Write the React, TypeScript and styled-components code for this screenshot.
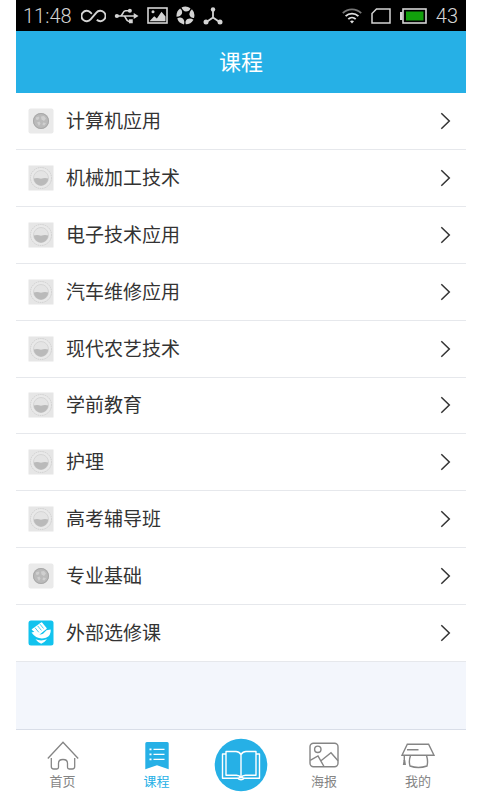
import React from 'react';
import styled, { createGlobalStyle } from 'styled-components';

const BLUE = '#26b0e6';
const GREY = '#858585';

const GlobalStyle = createGlobalStyle`
  * { box-sizing: border-box; }
  body {
    margin: 0;
    background: #fff;
    font-family: Roboto, "Noto Sans CJK SC", sans-serif;
  }
`;

const Screen = styled.div`
  display: flex;
  flex-direction: column;
  min-height: 100vh;
  margin: 0 14px 0 16px;
  background: #f3f6fc;
`;

const StatusBar = styled.div`
  display: flex;
  justify-content: space-between;
  align-items: center;
  height: 31px;
  padding: 0 8px 0 7px;
  background: #000;
  color: #d4d4d4;
  font-size: 20px;
  font-weight: 300;
  line-height: 30px;
`;

const StatusGroup = styled.div<{ $gap: number }>`
  display: flex;
  align-items: center;
  gap: ${(p) => p.$gap}px;
  svg { display: block; }
`;

const Clock = styled.time`
  min-width: 50px;
`;

const Header = styled.header`
  display: flex;
  align-items: center;
  justify-content: center;
  height: 62px;
  padding-top: 2px;
  background: ${BLUE};
`;

const Title = styled.h1`
  margin: 0;
  color: #fff;
  font-size: 22px;
  font-weight: 400;
  line-height: 32px;
`;

const Main = styled.main`
  flex: 1;
`;

const CourseList = styled.ul`
  display: grid;
  grid-auto-rows: 1fr;
  min-height: 569px;
  margin: 0;
  padding: 0;
  list-style: none;
  background: #fff;
`;

const CourseItem = styled.li`
  display: flex;
  border-bottom: 1px solid #e6e8ec;
`;

const CourseLink = styled.a`
  display: flex;
  flex: 1;
  align-items: center;
  gap: 12px;
  padding: 0 14px 0 12px;
  color: #333;
  text-decoration: none;
  svg { display: block; flex: none; }
`;

const CourseName = styled.span`
  flex: 1;
  padding-top: 2px;
  font-size: 19px;
  line-height: 28px;
`;

const TabBar = styled.nav`
  display: grid;
  grid-template-columns: 93fr 95fr 74fr 92fr 96fr;
  height: 71px;
  border-top: 1px solid #d9dee8;
  background: #fff;
`;

const Tab = styled.a<{ $active?: boolean }>`
  display: flex;
  flex-direction: column;
  align-items: center;
  gap: 1px;
  padding-top: 10px;
  color: ${(p) => (p.$active ? BLUE : GREY)};
  font-size: 13px;
  line-height: 20px;
  text-decoration: none;
  svg { display: block; }
`;

const CenterTab = styled(Tab)`
  padding-top: 8px;
`;

type BadgeKind = 'seal' | 'emblem' | 'hand';

const Badge = ({ kind }: { kind: BadgeKind }) => {
  if (kind === 'hand') {
    return (
      <svg width="26" height="26" viewBox="0 0 26 26" aria-hidden="true">
        <rect x="0.5" y="0.5" width="25" height="25" rx="2.5" fill="#12c3ee" />
        <path d="M4.500 9.500 13.500 3l4.500 5.500-7.500 6Z" fill="#fff" stroke="#fff" strokeWidth="1.500" strokeLinejoin="round" />
        <path d="m7 7.700 3.800 4.600M9.600 5.800l3.800 4.600M12 4.200l3.500 4.300" stroke="#12c3ee" strokeWidth=".8" />
        <path d="M3.500 12.500 7 11.800q4 4.200 8 2l3.500-3.500 4.200-.8q.5 6-4.700 8.300-9 2.500-14.500-5.300Z" fill="#fff" />
        <path d="M7.500 19.300q5.500 2.200 11.500 0-2 2.700-5.800 4.400-3.700-1.500-5.700-4.400Z" fill="#fff" />
      </svg>
    );
  }
  if (kind === 'seal') {
    return (
      <svg width="26" height="26" viewBox="0 0 26 26" aria-hidden="true">
        <rect x="0.5" y="0.5" width="25" height="25" rx="2" fill="#eaeaea" />
        <circle cx="13" cy="13" r="8" fill="#bababa" />
        <circle cx="13" cy="13" r="7.500" fill="none" stroke="#a8a8a8" />
        <path
          d="m8 9.500 2.500-1 1 1.500-1.500 2-2-.5ZM13 8.500l3-.5 2 2.500-2 2.500-2.500-1.500ZM9 14.500l2.500-1 1 2-1.500 2.500ZM15 14.500l3 .5-1.500 2.500-2-.5Z"
          fill="#cfcfcf"
        />
      </svg>
    );
  }
  return (
    <svg width="26" height="26" viewBox="0 0 26 26" aria-hidden="true">
      <rect x="0.5" y="0.5" width="25" height="25" fill="#e6e6e6" />
      <circle cx="13" cy="13" r="10.500" fill="#e9e9e9" stroke="#d0d0d0" strokeWidth="1" strokeDasharray="1.500 .8" />
      <circle cx="13" cy="13" r="7.500" fill="#e4e4e4" stroke="#cdcdcd" strokeWidth=".7" />
      <path d="M5.800 13.500q3.500-1 7.200.3 3.700-1.300 7.200-.3a7.200 7.200 0 0 1-14.400 0Z" fill="#bababa" />
    </svg>
  );
};

const Chevron = () => (
  <svg width="13" height="20" viewBox="0 0 13 20" fill="none" stroke="#333" strokeWidth="1.5" aria-hidden="true">
    <path d="M2.300 2.200 10.300 10l-8 7.800" />
  </svg>
);

const InfinityIcon = () => (
  <svg width="25" height="14" viewBox="0 0 25 14" fill="none" stroke="#d4d4d4" strokeWidth="1.900" aria-hidden="true">
    <path d="M15.800 10.800a5.200 5.200 0 1 0-.4-7.200L9.600 10.400a5.200 5.200 0 1 1-.4-7.200L10.800 4.800" />
  </svg>
);

const UsbIcon = () => (
  <svg width="25" height="18" viewBox="0 0 26 18" fill="none" stroke="#d4d4d4" strokeWidth="1.700" aria-hidden="true">
    <path d="M3 9h18M6.500 9C9 9 9 3.500 12 3.500h4M10 9c2.500 0 2.500 5.500 5 5.500h2" />
    <circle cx="3" cy="9" r="2.200" fill="#d4d4d4" stroke="none" />
    <circle cx="16.500" cy="3.500" r="2.100" fill="#d4d4d4" stroke="none" />
    <path d="M15.500 12.500h4v4h-4ZM20.500 5.800 25.500 9l-5 3.200Z" fill="#d4d4d4" stroke="none" />
  </svg>
);

const GalleryIcon = () => (
  <svg width="21" height="17" viewBox="0 0 21 17" aria-hidden="true">
    <rect x="1" y="1" width="19" height="15" fill="none" stroke="#d4d4d4" strokeWidth="1.600" />
    <path d="m2.500 14.300 4.700-5 2.700 2.300 4.600-6.800 4 4.700v4.800Z" fill="#d4d4d4" />
    <circle cx="6" cy="4.800" r="1.500" fill="#d4d4d4" />
  </svg>
);

const ShutterIcon = () => (
  <svg width="19" height="19" viewBox="0 0 20 20" fill="#d4d4d4" aria-hidden="true">
    {[0, 72, 144, 216, 288].map((angle) => (
      <path
        key={angle}
        transform={`rotate(${angle} 10 10)`}
        d="M5.800 1.500Q10.800-.8 15.200 2.300 14.200 5.800 10.500 5.800 7.200 5.300 5.800 1.500Z"
      />
    ))}
  </svg>
);

const TripodIcon = () => (
  <svg width="20" height="18" viewBox="0 0 20 18" stroke="#d4d4d4" strokeWidth="1.800" aria-hidden="true">
    <path d="M10 3v7.500L3.500 15M10 10.500l6.500 4.500" fill="none" />
    <g fill="#d4d4d4" stroke="none">
      <circle cx="10" cy="2.400" r="2.200" />
      <circle cx="3" cy="15" r="2.500" />
      <circle cx="17" cy="15" r="2.500" />
    </g>
  </svg>
);

const WifiIcon = () => (
  <svg width="20" height="16" viewBox="0 0 20 16" fill="none" strokeWidth="1.800" aria-hidden="true">
    <path d="M.8 5.200a13 13 0 0 1 18.400 0" stroke="#777" />
    <path d="M3.600 8.200a9 9 0 0 1 12.800 0M6.300 11.200a5.300 5.300 0 0 1 7.400 0" stroke="#e0e0e0" />
    <path d="M8 13.300a3 3 0 0 1 4 0l-2 2.300Z" fill="#e0e0e0" />
  </svg>
);

const SimIcon = () => (
  <svg width="20" height="16" viewBox="0 0 20 16" fill="none" stroke="#d4d4d4" strokeWidth="1.500" aria-hidden="true">
    <path d="M5.500 1H19v14H1V5.500Z" />
  </svg>
);

const BatteryIcon = () => (
  <svg width="27" height="16" viewBox="0 0 27 16" aria-hidden="true">
    <rect x="3" y="1" width="23" height="14" fill="none" stroke="#d4d4d4" strokeWidth="1.600" />
    <rect x="0" y="4" width="2.500" height="8" fill="#d4d4d4" />
    <rect x="6" y="3.500" width="17.500" height="9" fill="#12a00c" />
  </svg>
);

const HomeIcon = () => (
  <svg width="32" height="31" viewBox="0 0 32 31" fill="none" stroke={GREY} strokeWidth="1.300" aria-hidden="true">
    <path d="M.8 18.500 16 2.300l15.200 16.200" />
    <path d="M4.300 18v8.500q0 2.500 2.500 2.500h3q1.700 0 1.700-1.700v-4.100q0-3.700 4.500-3.700t4.500 3.700v4.100q0 1.700 1.700 1.700h3q2.500 0 2.500-2.500V18" />
  </svg>
);

const CourseIcon = () => (
  <svg width="26" height="31" viewBox="0 0 26 31" aria-hidden="true">
    <path d="M1.300 3.500q0-1.500 1.500-1.500h20.400q1.500 0 1.500 1.500V29.300L13 25.300 1.300 29.300Z" fill={BLUE} />
    <path d="M9.500 9.300h11M9.500 14.300h11M9.500 19.300h11" stroke="#fff" strokeWidth="1.300" />
    <path d="M5.500 9.300h2M5.500 14.300h2M5.500 19.300h2" stroke="#fff" strokeWidth="1.800" />
  </svg>
);

const BookIcon = () => (
  <svg width="54" height="54" viewBox="0 0 54 54" fill="none" stroke="#fff" strokeWidth="1.400" strokeLinejoin="round" aria-hidden="true">
    <circle cx="27" cy="27" r="26.300" fill={BLUE} stroke="none" />
    <path d="M27 38V16.500q-2-3-5-3H12v23.800h10.500q3 0 4.500 2.200 1.500-2.200 4.500-2.200H42V13.500H32q-3 0-5 3" />
    <path d="M12 16H8.500v24.300h15.300q1.200 1.500 3.200 1.500t3.200-1.500h15.300V16H42" />
    <path d="M24 40.300q3-1.500 6 0" />
  </svg>
);

const PosterIcon = () => (
  <svg width="32" height="31" viewBox="0 0 32 31" fill="none" stroke={GREY} strokeWidth="1.400" aria-hidden="true">
    <rect x="2" y="3.300" width="28" height="23.400" rx="3.500" />
    <circle cx="9.800" cy="9.300" r="3.200" />
    <path d="m2.200 20.300 7.800-4.300 6 10.500M13 20.800l10-8 7 8" />
  </svg>
);

const ProfileIcon = () => (
  <svg width="34" height="31" viewBox="0 0 34 31" fill="none" stroke={GREY} strokeWidth="1.400" aria-hidden="true">
    <path d="M6.300 4.300h21.300l5.400 11H1ZM6 9.700h11.500" />
    <path d="M9.500 15.500q-2 5.500-.5 10.500 8.300 3 17 0 1.300-5-.5-10.500" />
    <path d="M3.300 15.500V21" />
    <path d="M2.600 20h1.600l.8 5H1.800Z" fill={GREY} stroke="none" />
  </svg>
);

const courses: { name: string; badge: BadgeKind }[] = [
  { name: '计算机应用', badge: 'seal' },
  { name: '机械加工技术', badge: 'emblem' },
  { name: '电子技术应用', badge: 'emblem' },
  { name: '汽车维修应用', badge: 'emblem' },
  { name: '现代农艺技术', badge: 'emblem' },
  { name: '学前教育', badge: 'emblem' },
  { name: '护理', badge: 'emblem' },
  { name: '高考辅导班', badge: 'emblem' },
  { name: '专业基础', badge: 'seal' },
  { name: '外部选修课', badge: 'hand' },
];

export default function App() {
  return (
    <Screen lang="zh-CN">
      <GlobalStyle />
      <StatusBar>
        <StatusGroup $gap={8}>
          <Clock>11:48</Clock>
          <InfinityIcon />
          <UsbIcon />
          <GalleryIcon />
          <ShutterIcon />
          <TripodIcon />
        </StatusGroup>
        <StatusGroup $gap={9}>
          <WifiIcon />
          <SimIcon />
          <BatteryIcon />
          <span>43</span>
        </StatusGroup>
      </StatusBar>
      <Header>
        <Title>课程</Title>
      </Header>
      <Main>
        <CourseList>
          {courses.map((c) => (
            <CourseItem key={c.name}>
              <CourseLink href="#">
                <Badge kind={c.badge} />
                <CourseName>{c.name}</CourseName>
                <Chevron />
              </CourseLink>
            </CourseItem>
          ))}
        </CourseList>
      </Main>
      <TabBar>
        <Tab href="#"><HomeIcon />首页</Tab>
        <Tab href="#" $active aria-current="page"><CourseIcon />课程</Tab>
        <CenterTab href="#" aria-label="阅读"><BookIcon /></CenterTab>
        <Tab href="#"><PosterIcon />海报</Tab>
        <Tab href="#"><ProfileIcon />我的</Tab>
      </TabBar>
    </Screen>
  );
}
